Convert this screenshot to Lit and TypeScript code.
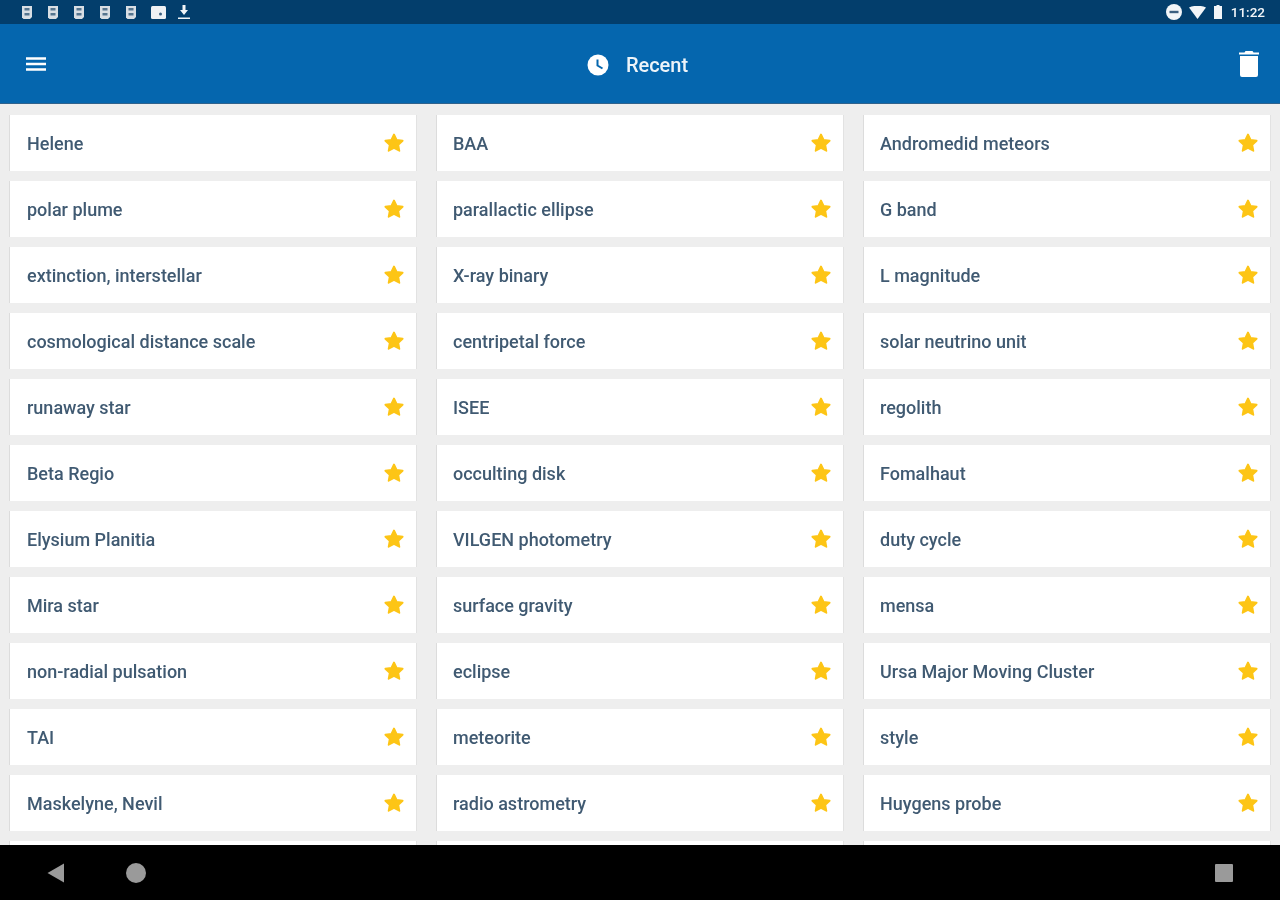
import { LitElement, html, css, svg } from "lit";
import { customElement } from "lit/decorators.js";

// listed row by row, three columns
const TERMS: string[] = [
  "Helene", "BAA", "Andromedid meteors",
  "polar plume", "parallactic ellipse", "G band",
  "extinction, interstellar", "X-ray binary", "L magnitude",
  "cosmological distance scale", "centripetal force", "solar neutrino unit",
  "runaway star", "ISEE", "regolith",
  "Beta Regio", "occulting disk", "Fomalhaut",
  "Elysium Planitia", "VILGEN photometry", "duty cycle",
  "Mira star", "surface gravity", "mensa",
  "non-radial pulsation", "eclipse", "Ursa Major Moving Cluster",
  "TAI", "meteorite", "style",
  "Maskelyne, Nevil", "radio astrometry", "Huygens probe",
  "", "", "",
];

const star = svg`<path d="M12 2.600l2.900 6 6.600.9-4.800 4.600 1.200 6.500L12 17.500l-5.900 3.100 1.200-6.500L2.500 9.500l6.600-.9z" fill="#fdc516" stroke="#fdc516" stroke-width="2" stroke-linejoin="round"/>`;

const sim = svg`<path d="M1 1h10v11l-2 2H2.500L1 12.500z" fill="#d8dee4"/><path d="M3.500 3h5v2.500h-5zM3.500 8h5v2.500h-5z" fill="#55758f"/>`;

@customElement("app-root")
export class AppRoot extends LitElement {
  static styles = css`
    :host {
      display: flex;
      flex-direction: column;
      width: 1280px;
      height: 900px;
      overflow: hidden;
      background: #eeeeee;
      font-family: Roboto, "Liberation Sans", sans-serif;
    }
    /* the reference is a soft upscale, text and icons need the same softness */
    .term,
    .title,
    .time,
    svg {
      filter: blur(0.55px);
    }
    .status {
      flex: none;
      height: 24px;
      background: #033e6c;
      display: flex;
      align-items: center;
      justify-content: space-between;
      padding: 0 15px 0 21px;
      color: #f2f5f8;
    }
    .status-left {
      display: flex;
      align-items: center;
      gap: 14px;
    }
    .status-right {
      display: flex;
      align-items: center;
      gap: 8px;
    }
    .status svg {
      display: block;
    }
    .time {
      font-size: 13.500px;
      font-weight: 500;
      margin-left: 1px;
    }
    .appbar {
      flex: none;
      height: 80px;
      background: #0566ae;
      border-bottom: 1px solid #30628c;
      box-sizing: border-box;
      display: grid;
      grid-template-columns: 1fr auto 1fr;
      align-items: center;
      padding: 0 21px 0 26px;
      color: #ffffff;
    }
    .appbar svg {
      display: block;
    }
    .title {
      display: flex;
      align-items: center;
      gap: 17px;
      font-size: 20px;
      font-weight: 500;
      color: #eef4f9;
      margin: 3px 10px 0 0;
    }
    .trash {
      justify-self: end;
      margin-top: 1px;
    }
    .list {
      flex: 1;
      min-height: 0;
      overflow: hidden;
      display: grid;
      grid-template-columns: repeat(3, 1fr);
      grid-auto-rows: 56px;
      column-gap: 21px;
      row-gap: 10px;
      padding: 11px 10px 0;
    }
    .card {
      background: #ffffff;
      box-shadow: -1px 0 0 #dcdcdc, 1px 0 0 #e2e2e2;
      display: flex;
      align-items: center;
      justify-content: space-between;
      padding: 0 12px 0 16px;
    }
    .card:nth-child(3n + 1) {
      padding-left: 17px;
    }
    .term {
      font-size: 18px;
      font-weight: 500;
      color: #405a72;
    }
    .card svg {
      display: block;
      flex: none;
    }
    .nav {
      flex: none;
      height: 55px;
      background: #000000;
      display: flex;
      align-items: center;
      justify-content: space-between;
      padding: 0 47px 0 47px;
    }
    .nav-left {
      display: flex;
      align-items: center;
      gap: 61px;
    }
    .nav svg {
      display: block;
    }
  `;

  render() {
    return html`
      <div class="status">
        <div class="status-left">
          ${[0, 1, 2, 3, 4].map(
            () => html`<svg width="12" height="15" viewBox="0 0 12 15">${sim}</svg>`
          )}
          <svg width="15" height="15" viewBox="0 0 15 15">
            <rect x="0" y="1" width="15" height="13" rx="1.500" fill="#eef1f4" />
            <circle cx="9.500" cy="9" r="1.500" fill="#3c5f80" />
          </svg>
          <svg width="12" height="16" viewBox="0 0 12 16" style="margin-left:-2px">
            <path d="M4.500 1h3v5h2.500L6 11 2 6h2.500zM0 13.500h12V15H0z" fill="#f2f5f8" />
          </svg>
        </div>
        <div class="status-right">
          <svg width="16" height="16" viewBox="0 0 16 16" style="margin-right:-1px">
            <circle cx="8" cy="8" r="8" fill="#f2f5f8" />
            <rect x="3.500" y="6.800" width="9" height="2.400" fill="#3c5f80" />
          </svg>
          <svg width="17" height="13" viewBox="0 0 17 13">
            <path d="M0 1.500C4.800-.8 12.200-.8 17 1.500L8.500 13z" fill="#f2f5f8" />
          </svg>
          <svg width="8" height="14" viewBox="0 0 8 14">
            <path d="M2.500 0h3v1H8v13H0V1h2.500z" fill="#f2f5f8" />
          </svg>
          <span class="time">11:22</span>
        </div>
      </div>

      <div class="appbar">
        <svg width="20" height="14" viewBox="0 0 20 14">
          <path d="M0 1.500h20M0 7h20M0 12.500h20" stroke="#fff" stroke-width="2.400" />
        </svg>
        <div class="title">
          <svg width="22" height="22" viewBox="0 0 22 22">
            <circle cx="11" cy="11" r="10.500" fill="#fff" />
            <path d="M10.500 5.500V11.500L15.500 14.500" fill="none" stroke="#0566ae" stroke-width="2" />
          </svg>
          <span>Recent</span>
        </div>
        <svg class="trash" width="20" height="26" viewBox="0 0 20 26">
          <path d="M6.500 0h7l1 1.500H20v2H0v-2h5.500zM1 5h18v19a2 2 0 0 1-2 2H3a2 2 0 0 1-2-2z" fill="#fff" />
        </svg>
      </div>

      <div class="list">
        ${TERMS.map(
          (term) => html`
            <div class="card">
              <span class="term">${term}</span>
              ${term
                ? html`<svg width="20" height="20" viewBox="1 1 22 22">${star}</svg>`
                : ""}
            </div>
          `
        )}
      </div>

      <div class="nav">
        <div class="nav-left">
          <svg width="18" height="20" viewBox="0 0 18 20">
            <path d="M17 .5V19.500L.5 10z" fill="#9a9a9a" />
          </svg>
          <svg width="20" height="20" viewBox="0 0 20 20">
            <circle cx="10" cy="10" r="10" fill="#9a9a9a" />
          </svg>
        </div>
        <svg width="18" height="18" viewBox="0 0 18 18">
          <rect width="18" height="18" rx="1" fill="#9a9a9a" />
        </svg>
      </div>
    `;
  }
}
